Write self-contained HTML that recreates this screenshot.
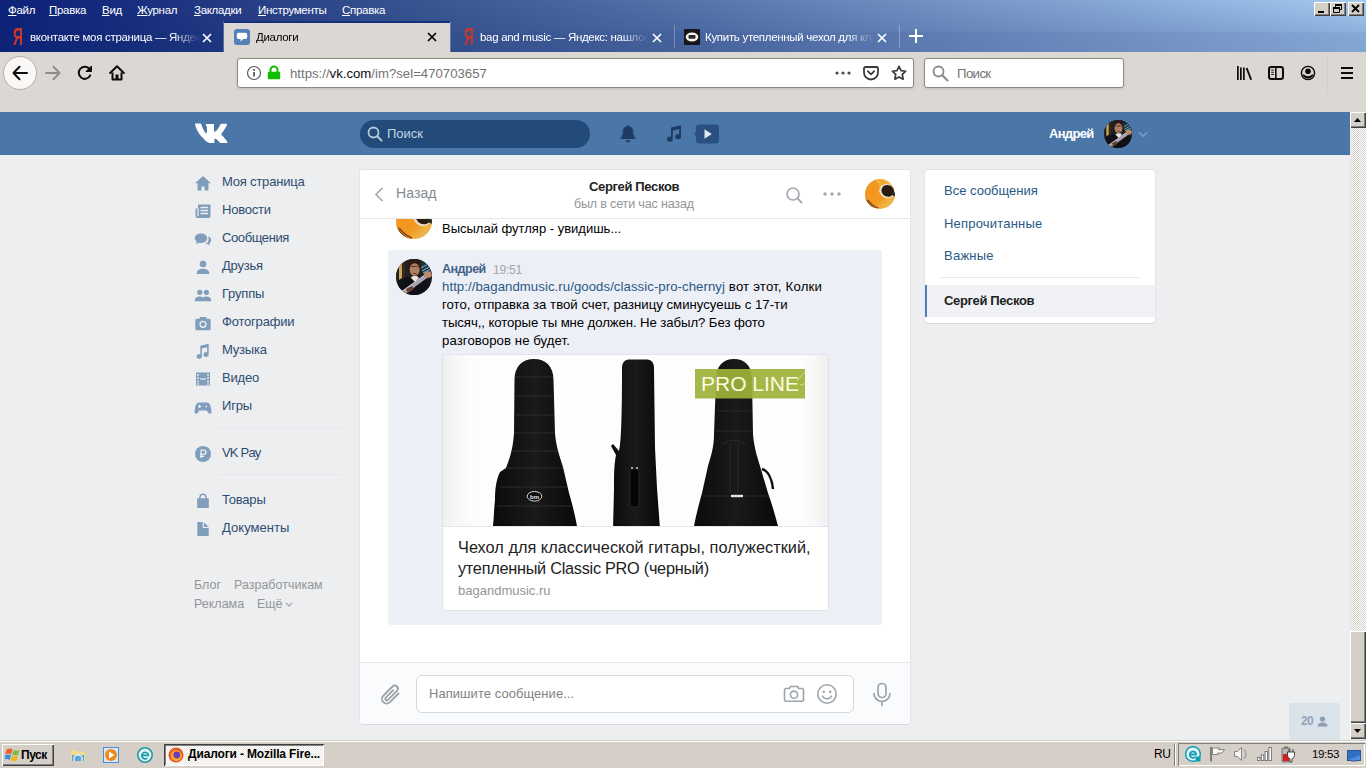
<!DOCTYPE html>
<html lang="ru">
<head>
<meta charset="utf-8">
<title>Диалоги</title>
<style>
*{box-sizing:border-box;margin:0;padding:0}
html,body{width:1366px;height:768px;overflow:hidden}
body{position:relative;background:#edeef0;font-family:"Liberation Sans","DejaVu Sans",sans-serif;font-size:13px;color:#000}
.abs{position:absolute}
.t{position:absolute;white-space:nowrap;line-height:1}
/* ---------- browser chrome ---------- */
#titlebar{position:absolute;left:0;top:0;width:1366px;height:52px;
 background:linear-gradient(to bottom,rgba(10,36,106,0) 0,rgba(10,36,106,.1) 22px,rgba(10,36,106,.14) 31px,rgba(10,36,106,.2) 33px,rgba(10,36,106,.22) 52px),
 linear-gradient(to right,#0d2278 0,#152a7c 7%,#3a5692 31%,#5774ab 51%,#a6caf0 100%);}
.menu{top:5px;color:#fff;font-size:11.5px;font-family:"Liberation Sans",sans-serif;letter-spacing:-.3px}
.menu u{text-decoration:underline;text-underline-offset:1px}
.tab{position:absolute;top:22px;height:30px;color:#fff;font-size:12px}
.tab .lbl{position:absolute;top:8px;left:30px;white-space:nowrap;overflow:hidden;font-family:"Liberation Sans",sans-serif;font-size:11.5px;letter-spacing:-.3px;line-height:14px;-webkit-mask-image:linear-gradient(to right,#000 0,#000 calc(100% - 26px),transparent 100%);mask-image:linear-gradient(to right,#000 0,#000 calc(100% - 26px),transparent 100%)}
#navbar{position:absolute;left:0;top:52px;width:1366px;height:60px;background:#dbd8d3}
.field{position:absolute;background:#fff;border:1px solid #8c8a85;border-radius:3px;box-shadow:0 1px 3px rgba(0,0,0,.12)}

.wb{position:absolute;top:2px;width:16px;height:14px;background:#d4d0c8;box-shadow:inset 1px 1px 0 #fff,inset -1px -1px 0 #404040,inset -2px -2px 0 #808080}
.wb svg{position:absolute;left:0;top:0}
.tab.act{background:#dbd8d3;top:21px;height:31px;border-top:2px solid #16307c;box-shadow:-1px 0 0 rgba(255,255,255,.25),1px 0 0 rgba(255,255,255,.25)}
.tab.act .lbl{top:7px}
.tab.act .tx{top:9px}
.ya{position:absolute;top:4px;color:#cb352c;font:bold 23px/23px "Liberation Sans",sans-serif;transform:scaleX(.6);transform-origin:0 0}
.tx{position:absolute;top:11px}
.tsep{position:absolute;top:25px;width:1px;height:23px;background:rgba(255,255,255,.28)}
.url{font-size:13.2px;letter-spacing:0;color:#0c0c0d;font-family:"Liberation Sans",sans-serif}
/* ---------- vk ---------- */
#vkhead{position:absolute;left:0;top:112px;width:1350px;height:43px;background:#4a76a8;border-bottom:1px solid #4872a3}
.lm{position:absolute;left:222px;font-size:13px;letter-spacing:-.2px;color:#2d4d70;white-space:nowrap;line-height:16px}
.panel{position:absolute;background:#fff;border-radius:4px;box-shadow:0 1px 0 0 #d7d8db,0 0 0 1px #e3e4e8}

.ft{font-size:12.500px;color:#939699}
.ava1{border-radius:50%;background:
 radial-gradient(circle at 52% 40%,#c9a58d 0,#b8836a 9%,rgba(80,40,30,0) 17%),
 linear-gradient(128deg,rgba(0,0,0,0) 52%,#d8c8b0 54%,#cbb79c 60%,rgba(0,0,0,0) 63%),
 linear-gradient(100deg,#3a4a40 0,#2b3036 28%,#15161c 55%,#20222c 75%,#5b6f9a 100%)}

.msg{font-size:13.2px;color:#000}
.rm{font-size:13px;color:#2a5885}
.ava2{border-radius:50%;background:
 radial-gradient(ellipse 34% 30% at 78% 42%,#1a1510 0,#2a1d14 55%,rgba(40,25,15,0) 100%),
 radial-gradient(ellipse 46% 42% at 76% 42%,#f7e6c8 0,#e9c48c 70%,rgba(230,180,100,0) 100%),
 radial-gradient(circle at 35% 45%,#f6a92e 0,#ee8a12 45%,#d96a08 80%,#b85206 100%)}
.ava3{border-radius:50%;background:
 radial-gradient(circle at 50% 34%,#d0a78c 0,#b9836a 10%,rgba(80,40,30,0) 17%),
 linear-gradient(128deg,rgba(0,0,0,0) 55%,#bda27a 57%,#a98d65 63%,rgba(0,0,0,0) 66%),
 radial-gradient(circle at 78% 30%,#50648c 0,rgba(40,50,80,0) 30%),
 linear-gradient(100deg,#46503e 0,#2b2d30 25%,#121318 55%,#1c1e28 100%)}
#sb{position:absolute;left:1350px;top:112px;width:16px;height:628px;background:repeating-conic-gradient(#fff 0 25%,#d4d0c8 0 50%);background-size:2px 2px}
.sbtn{position:absolute;left:0;width:16px;height:16px;background:#d4d0c8;box-shadow:inset 1px 1px 0 #fff,inset -1px -1px 0 #404040,inset -2px -2px 0 #808080}
.sbtn svg{position:absolute;left:0;top:0}
.btn3d{background:#d4d0c8;box-shadow:inset 1px 1px 0 #fff,inset -1px -1px 0 #404040,inset -2px -2px 0 #808080}
/* ---------- taskbar ---------- */
#taskbar{position:absolute;left:0;top:740px;width:1366px;height:28px;background:#d5cfc8;box-shadow:inset 0 1px 0 #d4d0c8,inset 0 2px 0 #fff}
</style>
</head>
<body>
<svg width="0" height="0" style="position:absolute">
  <defs>
    <clipPath id="cc"><circle cx="18" cy="18" r="18"/></clipPath>
    <radialGradient id="og" cx=".3" cy=".45" r=".75"><stop offset="0" stop-color="#f7941d"/><stop offset=".45" stop-color="#f09a22"/><stop offset=".8" stop-color="#f0b548"/><stop offset="1" stop-color="#e9a83a"/></radialGradient>
    <symbol id="avS" viewBox="0 0 36 36">
      <g clip-path="url(#cc)">
        <rect width="36" height="36" fill="url(#og)"/>
        <path d="M0 22c4 8 10 13 18 15l-18 3z" fill="#4a1f08"/>
        <path d="M3 25c4 5 8 8 13 10" stroke="#8a3c0c" stroke-width="1.500" fill="none"/>
        <path d="M14 2c6 2 6 10 3 14" stroke="#f6c052" stroke-width="3" fill="none" opacity=".7"/>
        <ellipse cx="26.500" cy="14.500" rx="9.300" ry="8.600" fill="#e9dfc6" transform="rotate(25 26.500 14.500)"/>
        <ellipse cx="27.300" cy="14.200" rx="7.600" ry="6.900" fill="#2a1a10" transform="rotate(25 27.300 14.200)"/>
        <path d="M30 18l6 3v-5z" fill="#1f2a22"/>
      </g>
    </symbol>
    <symbol id="avA" viewBox="0 0 36 36">
      <g clip-path="url(#cc)">
        <rect width="36" height="36" fill="#15161b"/>
        <rect x="0" y="0" width="36" height="20" fill="#23201f"/>
        <path d="M3 6l3-4v17l-3 2z" fill="#c9a560"/>
        <path d="M6.500 3h2.500v14l-2.500 2z" fill="#3a2a1c"/>
        <path d="M22 4l14-2v16l-8-3z" fill="#1d3440"/>
        <path d="M25 9l9-5M26 12l9-5M27 14l8-4" stroke="#6fa0b4" stroke-width="1.200"/>
        <path d="M12 8c0-5 3-7 6.500-7S25 3 25 8v3H12z" fill="#2c1a12"/>
        <ellipse cx="18.600" cy="10.500" rx="5" ry="6.300" fill="#b07f66"/>
        <path d="M14.500 8c2-1 6-1 8.500 0" stroke="#6a4636" stroke-width="1"/>
        <path d="M17 14.500h3.500" stroke="#7a3f36" stroke-width="1.200"/>
        <path d="M13 20l4-3h4l3 3-5 4z" fill="#e8e4e0"/>
        <path d="M2 26c2-5 8-8 12-8l5 5 5-5c5 1 9 4 10 9l-6 10H6z" fill="#101116"/>
        <path d="M5 33L33 13l2 3L8 36z" fill="#a9a0b6"/>
        <path d="M5 33L33 13" stroke="#d8d2de" stroke-width="1"/>
        <ellipse cx="32" cy="15.500" rx="4" ry="3.300" fill="#b98a70"/>
        <path d="M4 31l6 2-3 4-5-2z" fill="#d6b23a"/>
        <path d="M10 30l6-3 2 3-6 4z" fill="#6a4030"/>
      </g>
    </symbol>
  </defs>
</svg>

<!-- ================= TITLE / MENU / TABS ================= -->
<div id="titlebar">
  <span class="t menu" style="left:8px"><u>Ф</u>айл</span>
  <span class="t menu" style="left:49px"><u>П</u>равка</span>
  <span class="t menu" style="left:102px"><u>В</u>ид</span>
  <span class="t menu" style="left:137px"><u>Ж</u>урнал</span>
  <span class="t menu" style="left:194px"><u>З</u>акладки</span>
  <span class="t menu" style="left:258px"><u>И</u>нструменты</span>
  <span class="t menu" style="left:342px"><u>С</u>правка</span>

  <!-- window buttons -->
  <div class="wb" style="left:1314px"><svg width="16" height="14" viewBox="0 0 16 14"><rect x="4" y="9" width="6" height="2" fill="#000"/></svg></div>
  <div class="wb" style="left:1330px"><svg width="16" height="14" viewBox="0 0 16 14"><path d="M5.5 2.5h6v5h-6z M3.500 5.500h6v5h-6z" fill="none" stroke="#000" stroke-width="1"/><rect x="5" y="2" width="7" height="2" fill="#000"/><rect x="3" y="5" width="7" height="2" fill="#000"/><rect x="4" y="7" width="5" height="3" fill="#d4d0c8"/></svg></div>
  <div class="wb" style="left:1348px"><svg width="16" height="14" viewBox="0 0 16 14"><path d="M4 3l7 7M11 3l-7 7" stroke="#000" stroke-width="1.8" fill="none"/></svg></div>

  <!-- tab 1 -->
  <div class="tab" style="left:0;width:224px">
    <span class="ya" style="left:13px">Я</span>
    <span class="lbl" style="width:170px">вконтакте моя страница — Яндекс: нашлось</span>
    <svg class="tx" style="left:202px" width="10" height="10" viewBox="0 0 10 10"><path d="M1 1l8 8M9 1l-8 8" stroke="#fff" stroke-width="1.7" fill="none"/></svg>
  </div>
  <!-- tab 2 (active) -->
  <div class="tab act" style="left:224px;width:226px">
    <svg class="abs" style="left:10px;top:6px" width="16" height="16" viewBox="0 0 16 16"><rect width="16" height="16" rx="3" fill="#5181b8"/><path d="M4.600 3.800h6.800a1.800 1.800 0 0 1 1.800 1.800v2.600a1.800 1.800 0 0 1-1.800 1.800H9.200L6.600 12.400V10H4.600a1.800 1.800 0 0 1-1.800-1.800V5.600a1.800 1.800 0 0 1 1.800-1.800z" fill="#fff"/></svg>
    <span class="lbl" style="width:150px;left:32px;color:#000">Диалоги</span>
    <svg class="tx" style="left:203px" width="10" height="10" viewBox="0 0 10 10"><path d="M1 1l8 8M9 1l-8 8" stroke="#000" stroke-width="1.7" fill="none"/></svg>
  </div>
  <!-- tab 3 -->
  <div class="tab" style="left:450px;width:224px">
    <span class="ya" style="left:14px">Я</span>
    <span class="lbl" style="width:168px;left:30px">bag and music — Яндекс: нашлось 15 млн</span>
    <svg class="tx" style="left:202px" width="10" height="10" viewBox="0 0 10 10"><path d="M1 1l8 8M9 1l-8 8" stroke="#fff" stroke-width="1.7" fill="none"/></svg>
  </div>
  <div class="tsep" style="left:674px"></div>
  <!-- tab 4 -->
  <div class="tab" style="left:675px;width:224px">
    <svg class="abs" style="left:9px;top:7px" width="16" height="16" viewBox="0 0 16 16"><rect width="16" height="16" fill="#15171c"/><ellipse cx="8" cy="8" rx="6.300" ry="4.600" fill="#f4f2ea"/><rect x="4.500" y="6" width="7" height="3.800" rx="1" fill="#2a2a2a"/></svg>
    <span class="lbl" style="width:169px;left:30px">Купить утепленный чехол для классической</span>
    <svg class="tx" style="left:202px" width="10" height="10" viewBox="0 0 10 10"><path d="M1 1l8 8M9 1l-8 8" stroke="#fff" stroke-width="1.700" fill="none"/></svg>
  </div>
  <div class="tsep" style="left:899px"></div>
  <svg class="abs" style="left:909px;top:29px" width="14" height="14" viewBox="0 0 14 14"><path d="M7 0v14M0 7h14" stroke="#fff" stroke-width="2" fill="none"/></svg>
</div>

<div id="navbar">
  <div class="abs" style="left:3px;top:4px;width:34px;height:34px;border-radius:50%;background:#f9f8f7;border:1px solid #b4b1ab"></div>
  <svg class="abs" style="left:12px;top:13px" width="16" height="16" viewBox="0 0 16 16"><path d="M15 8H2M7.500 1.800L1.500 8l6 6.200" stroke="#0c0c0d" stroke-width="2" fill="none" stroke-linecap="round" stroke-linejoin="round"/></svg>
  <svg class="abs" style="left:45px;top:13px" width="16" height="16" viewBox="0 0 16 16"><path d="M1 8h13M8.500 1.800L14.500 8l-6 6.200" stroke="#8f8d89" stroke-width="2" fill="none" stroke-linecap="round" stroke-linejoin="round"/></svg>
  <svg class="abs" style="left:77px;top:13px" width="16" height="16" viewBox="0 0 16 16"><path d="M13.200 10.400A6 6 0 1 1 12.600 4.300" stroke="#0c0c0d" stroke-width="2" fill="none" stroke-linecap="round"/><path d="M14.500 1v5.500H9z" fill="#0c0c0d" stroke="#0c0c0d" stroke-width="1" stroke-linejoin="round"/></svg>
  <svg class="abs" style="left:109px;top:13px" width="16" height="16" viewBox="0 0 16 16"><path d="M1.200 8L8 1.300 14.800 8" stroke="#0c0c0d" stroke-width="2" fill="none" stroke-linecap="round" stroke-linejoin="round"/><path d="M3.500 7.500V14.500h9V7.500" stroke="#0c0c0d" stroke-width="2" fill="none" stroke-linejoin="round"/><rect x="6.500" y="9.500" width="3" height="4.500" fill="#0c0c0d"/></svg>

  <!-- url bar -->
  <div class="field" style="left:237px;top:6px;width:677px;height:30px"></div>
  <svg class="abs" style="left:246px;top:13px" width="16" height="16" viewBox="0 0 16 16"><circle cx="8" cy="8" r="6.500" fill="none" stroke="#5a5a5a" stroke-width="1.200"/><rect x="7.200" y="7" width="1.600" height="4.500" fill="#4a4a4a"/><circle cx="8" cy="5" r="1" fill="#4a4a4a"/></svg>
  <svg class="abs" style="left:266px;top:13px" width="16" height="16" viewBox="0 0 16 16"><path d="M4.500 7V5a3.500 3.500 0 0 1 7 0v2" fill="none" stroke="#12bc00" stroke-width="2"/><rect x="1.800" y="6.800" width="12.400" height="7.400" rx="1" fill="#12bc00"/></svg>
  <span class="t url" style="left:290px;top:15px"><span style="color:#737373">https://</span>vk.com<span style="color:#737373">/im?sel=470703657</span></span>
  <svg class="abs" style="left:835px;top:19px" width="16" height="4" viewBox="0 0 16 4"><circle cx="2" cy="2" r="1.600" fill="#4a4a4a"/><circle cx="8" cy="2" r="1.600" fill="#4a4a4a"/><circle cx="14" cy="2" r="1.600" fill="#4a4a4a"/></svg>
  <svg class="abs" style="left:863px;top:14px" width="16" height="15" viewBox="0 0 16 15"><path d="M2.500 1h11a1.500 1.500 0 0 1 1.500 1.500V6.500a7 7 0 0 1-14 0V2.500A1.500 1.500 0 0 1 2.500 1z" fill="none" stroke="#3a3a3a" stroke-width="1.800"/><path d="M4.800 5.200L8 8.300l3.200-3.100" fill="none" stroke="#3a3a3a" stroke-width="1.800" stroke-linecap="round" stroke-linejoin="round"/></svg>
  <svg class="abs" style="left:891px;top:13px" width="16" height="16" viewBox="0 0 16 16"><path d="M8 1.300l2.060 4.300 4.640.62-3.400 3.260.85 4.720L8 11.900l-4.150 2.300.85-4.720-3.400-3.260 4.640-.62z" fill="none" stroke="#3a3a3a" stroke-width="1.700" stroke-linejoin="round"/></svg>

  <!-- search bar -->
  <div class="field" style="left:924px;top:6px;width:200px;height:30px"></div>
  <svg class="abs" style="left:932px;top:13px" width="17" height="17" viewBox="0 0 17 17"><circle cx="6.500" cy="6.500" r="5" fill="none" stroke="#8a8a8a" stroke-width="1.800"/><path d="M10.300 10.300L15.500 15.500" stroke="#8a8a8a" stroke-width="2" stroke-linecap="round"/></svg>
  <span class="t url" style="left:957px;top:15px;color:#737373;letter-spacing:-.6px">Поиск</span>

  <!-- right icons -->
  <svg class="abs" style="left:1236px;top:14px" width="16" height="14" viewBox="0 0 16 14"><rect x="1" y="0" width="1.700" height="14" fill="#0c0c0d"/><rect x="4" y="1.500" width="1.700" height="12.500" fill="#0c0c0d"/><rect x="7" y="1.500" width="1.700" height="12.500" fill="#0c0c0d"/><path d="M10.600 2L15.200 13.700" stroke="#0c0c0d" stroke-width="1.900" fill="none"/></svg>
  <svg class="abs" style="left:1268px;top:14px" width="16" height="14" viewBox="0 0 16 14"><rect x="1" y="1" width="14" height="12" rx="2.200" fill="none" stroke="#0c0c0d" stroke-width="2"/><rect x="7" y="1" width="1.600" height="12" fill="#0c0c0d"/><rect x="3.200" y="3.600" width="2.600" height="1" fill="#0c0c0d"/><rect x="3.200" y="5.800" width="2.600" height="1" fill="#0c0c0d"/><rect x="3.200" y="8" width="2.600" height="1" fill="#0c0c0d"/></svg>
  <svg class="abs" style="left:1300px;top:13px" width="16" height="16" viewBox="0 0 16 16"><circle cx="8" cy="8" r="6.600" fill="none" stroke="#0c0c0d" stroke-width="1.400"/><circle cx="8" cy="6.200" r="2.800" fill="#0c0c0d"/><path d="M3.200 9.800a5.300 5.300 0 0 0 9.600 0 6.500 6.500 0 0 1-9.600 0z" fill="#0c0c0d" stroke="#0c0c0d" stroke-width="1.300"/></svg>
  <div class="abs" style="left:1327px;top:5px;width:1px;height:36px;background:#d1cec8"></div>
  <div class="abs" style="left:1341px;top:15px;width:12px;height:2px;background:#0c0c0d"></div>
  <div class="abs" style="left:1341px;top:20px;width:12px;height:2px;background:#0c0c0d"></div>
  <div class="abs" style="left:1341px;top:25px;width:12px;height:2px;background:#0c0c0d"></div>
</div>

<!-- ================= VK ================= -->
<div id="vkhead">
  <svg class="abs" style="left:195px;top:11px" width="33" height="20" viewBox="0 0 33 20"><path d="M0 .5h5.200c.7 0 1 .3 1.200 1 1.300 4.200 3.600 8.300 4.800 8.800.5.200.7-.1.700-1.200V4.700c-.1-2-1.200-2.200-1.200-2.900 0-.4.300-.8.800-.8h6.700c.6 0 .8.300.8 1v6c0 .6.300.8.500.8.600 0 1.200-.4 2.300-1.600 2-2.400 3.500-5.500 3.500-5.500.2-.5.600-.9 1.300-.9h4.300c1 0 1.200.5 1 1.200-.6 2.400-5.300 8.500-5.300 8.500-.4.600-.5.900 0 1.600.4.500 1.700 1.600 2.600 2.600 1.600 1.800 2.800 3.300 3.100 4.300.3 1-.2 1.500-1.200 1.500h-4.600c-1.100 0-1.500-.7-3.400-2.700-1.700-1.700-2.500-2-2.900-2-.6 0-.8.200-.8 1v2.600c0 .8-.2 1.100-2 1.100-3.200 0-6.800-1.900-9.300-5.500C2.600 10 .6 3.800.2 1.700 0 .9.100.5 0 .5z" fill="#fff"/></svg>
  <div class="abs" style="left:360px;top:8px;width:230px;height:28px;border-radius:14px;background:#224b7a"></div>
  <svg class="abs" style="left:367px;top:14px" width="16" height="16" viewBox="0 0 16 16"><circle cx="6.500" cy="6.500" r="5" fill="none" stroke="#b7c7dc" stroke-width="1.800"/><path d="M10.300 10.300L14.600 14.600" stroke="#b7c7dc" stroke-width="2" stroke-linecap="round"/></svg>
  <span class="t" style="left:387px;top:15px;font-size:13px;color:#c4d2e4">Поиск</span>
  <svg class="abs" style="left:619px;top:12px" width="18" height="20" viewBox="0 0 18 20"><path d="M9 1.200c.7 0 1.200.5 1.200 1.100 2.500.6 4 2.600 4 5.300 0 3.800.8 5 2.200 6.300.4.400.2 1.100-.5 1.100H2.100c-.7 0-.9-.7-.5-1.100C3 12.600 3.800 11.400 3.800 7.600c0-2.700 1.500-4.700 4-5.300 0-.6.500-1.100 1.200-1.100zM6.800 16.200h4.400a2.200 2.200 0 0 1-4.400 0z" fill="#1e3c63"/></svg>
  <svg class="abs" style="left:665px;top:12px" width="18" height="20" viewBox="0 0 18 20"><path d="M6 3.600l10-2.400v11.500a2.900 2.500 0 1 1-1.800-2.300V5L7.800 6.500v8.700a2.900 2.500 0 1 1-1.800-2.300z" fill="#1e3c63"/></svg>
  <svg class="abs" style="left:694px;top:11px" width="26" height="22" viewBox="0 0 26 22"><path d="M5 1.500h17a3 3 0 0 1 3 3v13a3 3 0 0 1-3 3H5a3 3 0 0 1-3-3V14l-1.500-3L2 8V4.500a3 3 0 0 1 3-3z" fill="#2a5080"/><path d="M10.500 6.200l7.300 4.800-7.300 4.800z" fill="#dfe7f1"/></svg>
  <span class="t" style="left:1049px;top:15px;font-size:13px;font-weight:bold;color:#fff;letter-spacing:-.7px">Андрей</span>
  <svg class="abs" style="left:1104px;top:8px" width="28" height="28"><use href="#avA"/></svg>
  <svg class="abs" style="left:1138px;top:19px" width="10" height="7" viewBox="0 0 10 7"><path d="M1 1.200l4 4 4-4" fill="none" stroke="#7f9fc8" stroke-width="1.600"/></svg>
</div>
<!-- left menu -->
  <div class="abs" style="left:194px;top:174px;width:18px;height:18px"><svg width="18" height="18" viewBox="0 0 18 18" fill="#819dbc"><path d="M9 2L1 9.300h2.600V16.500h3.900v-4h3v4h3.900V9.300H17z"/></svg></div>
  <span class="lm" style="top:174px">Моя страница</span>
  <div class="abs" style="left:194px;top:202px;width:18px;height:18px"><svg width="18" height="18" viewBox="0 0 18 18" fill="#819dbc"><path d="M4 2.500h11.500a1 1 0 0 1 1 1V14a2 2 0 0 1-2 2H3.500a2 2 0 0 1-2-2V6.500H4z"/><path d="M4 6.500V14" stroke="#edeef0" stroke-width="1.200"/><path d="M6.500 5.500h7.500M6.500 8.500h7.500M6.500 11.500h7.500" stroke="#edeef0" stroke-width="1.300"/></svg></div>
  <span class="lm" style="top:202px">Новости</span>
  <div class="abs" style="left:194px;top:230px;width:18px;height:18px"><svg width="18" height="18" viewBox="0 0 18 18" fill="#819dbc"><path d="M7 3.500c3.600 0 6.200 2.100 6.200 4.700S10.600 12.900 7 12.900c-.7 0-1.400-.1-2-.2-.8.700-2 1.200-3.200 1.200.6-.6 1-1.500 1.100-2.200C1.700 10.800.8 9.600.8 8.200.8 5.600 3.400 3.500 7 3.500z"/><path d="M14.400 6.200c1.700.8 2.800 2.200 2.800 3.800 0 1.300-.7 2.400-1.800 3.200.1.600.4 1.300.9 1.800-1.100 0-2.100-.4-2.800-1-.7.200-1.500.2-2.300.1 2-1 3.400-2.700 3.400-4.900 0-1-.1-2.100-.2-3z"/></svg></div>
  <span class="lm" style="top:230px;letter-spacing:-.4px">Сообщения</span>
  <div class="abs" style="left:194px;top:258px;width:18px;height:18px"><svg width="18" height="18" viewBox="0 0 18 18" fill="#819dbc"><circle cx="9" cy="6" r="3.300"/><path d="M2.800 15.500c0-3.200 2.800-4.700 6.200-4.700s6.200 1.500 6.200 4.700v.5H2.800z"/></svg></div>
  <span class="lm" style="top:258px">Друзья</span>
  <div class="abs" style="left:194px;top:286px;width:18px;height:18px"><svg width="18" height="18" viewBox="0 0 18 18" fill="#819dbc"><circle cx="5.800" cy="6.300" r="2.600"/><circle cx="12.400" cy="6.300" r="2.600"/><path d="M.8 14.800c0-2.900 2.300-4.200 5-4.200 1.300 0 2.400.3 3.300.9.900-.6 2-.9 3.300-.9 2.700 0 4.800 1.300 4.800 4.200v.4H.8z"/></svg></div>
  <span class="lm" style="top:286px">Группы</span>
  <div class="abs" style="left:194px;top:314px;width:18px;height:18px"><svg width="18" height="18" viewBox="0 0 18 18" fill="#819dbc"><path d="M6.300 3l-1.200 1.800H2.800A1.500 1.500 0 0 0 1.300 6.300v8.400a1.500 1.500 0 0 0 1.500 1.500h12.400a1.500 1.500 0 0 0 1.500-1.500V6.300a1.500 1.500 0 0 0-1.500-1.500h-2.300L11.700 3z"/><circle cx="9" cy="10.300" r="3.600" fill="#edeef0"/><circle cx="9" cy="10.300" r="2.200"/></svg></div>
  <span class="lm" style="top:314px">Фотографии</span>
  <div class="abs" style="left:194px;top:342px;width:18px;height:18px"><svg width="18" height="18" viewBox="0 0 18 18" fill="#819dbc"><path d="M6.300 3.800l8.400-2v10.700a2.600 2.300 0 1 1-1.600-2.100V5.200L7.900 6.400v8.100a2.600 2.300 0 1 1-1.600-2.100z"/></svg></div>
  <span class="lm" style="top:342px">Музыка</span>
  <div class="abs" style="left:194px;top:370px;width:18px;height:18px"><svg width="18" height="18" viewBox="0 0 18 18" fill="#819dbc"><path d="M2 2.500h14v13H2z"/><path d="M3.200 4h1.600v1.800H3.200zM3.200 7.200h1.600V9H3.200zM3.200 10.400h1.600v1.800H3.200zM3.200 13.300h1.600v1.400H3.200zM13.200 4h1.600v1.800h-1.600zM13.200 7.200h1.600V9h-1.600zM13.200 10.400h1.600v1.800h-1.600zM13.200 13.300h1.600v1.400h-1.600z" fill="#edeef0"/><path d="M6 8.400h6v1.200H6z" fill="#edeef0"/></svg></div>
  <span class="lm" style="top:370px">Видео</span>
  <div class="abs" style="left:194px;top:398px;width:18px;height:18px"><svg width="18" height="18" viewBox="0 0 18 18" fill="#819dbc"><path d="M5.300 4.500h7.400c2.300 0 3.600 1.800 4.100 4.600l.7 4.400c.3 2.100-2.200 3-3.300 1.300l-1.500-2.300H5.300l-1.500 2.300c-1.100 1.700-3.600.8-3.300-1.300l.7-4.400C1.700 6.300 3 4.500 5.300 4.500z"/><path d="M5.600 6.800v3.200M4 8.400h3.200" stroke="#edeef0" stroke-width="1.100"/><circle cx="12.300" cy="8.400" r=".9" fill="#edeef0"/></svg></div>
  <span class="lm" style="top:398px">Игры</span>
  <div class="abs" style="left:194px;top:445px;width:18px;height:18px"><svg width="18" height="18" viewBox="0 0 18 18" fill="#819dbc"><circle cx="9" cy="9" r="8"/><path d="M7.200 13V5.200h2.700a2.100 2.100 0 0 1 0 4.200H6M6 11.300h4" stroke="#edeef0" stroke-width="1.300" fill="none"/></svg></div>
  <span class="lm" style="top:445px;letter-spacing:-.8px">VK Pay</span>
  <div class="abs" style="left:194px;top:492px;width:18px;height:18px"><svg width="18" height="18" viewBox="0 0 18 18" fill="#819dbc"><path d="M3.200 6.300h11.600V16H3.200z"/><path d="M6 8V5.200a3 3 0 0 1 6 0V8" fill="none" stroke="#819dbc" stroke-width="1.400"/></svg></div>
  <span class="lm" style="top:492px">Товары</span>
  <div class="abs" style="left:194px;top:520px;width:18px;height:18px"><svg width="18" height="18" viewBox="0 0 18 18" fill="#819dbc"><path d="M3.300 2h6.400l5 5v9H3.300z"/><path d="M9.300 2v5.500h5.400" fill="none" stroke="#edeef0" stroke-width="1.200"/></svg></div>
  <span class="lm" style="top:520px;letter-spacing:.05px">Документы</span>
  <div class="abs" style="left:217px;top:427px;width:125px;height:1px;background:#e4e6e9"></div>
  <div class="abs" style="left:217px;top:474px;width:125px;height:1px;background:#e4e6e9"></div>
  <span class="t ft" style="left:194px;top:579px">Блог</span>
  <span class="t ft" style="left:234px;top:579px">Разработчикам</span>
  <span class="t ft" style="left:194px;top:598px">Реклама</span>
  <span class="t ft" style="left:257px;top:598px">Ещё</span>
  <svg class="abs" style="left:285px;top:602px" width="8" height="5" viewBox="0 0 8 5"><path d="M1 1l3 3 3-3" fill="none" stroke="#a9adb3" stroke-width="1.300"/></svg>

<div class="panel" id="chat" style="left:360px;top:170px;width:550px;height:554px;overflow:hidden;border-radius:2px 2px 4px 4px">
  <!-- coordinates inside are relative to (360,170) -->
  <!-- previous message (partially hidden under header) -->
  <svg class="abs" style="left:36px;top:33px" width="36" height="36"><use href="#avS"/></svg>
  <span class="t msg" style="left:82px;top:52px;font-size:13px">Высылай футляр - увидишь...</span>
  <span class="t" style="left:82px;top:34px;font-size:13px;font-weight:bold;color:#42648b">Сергей</span>

  <!-- selected message -->
  <div class="abs" style="left:28px;top:80px;width:494px;height:375px;background:#edeff6;border-radius:3px"></div>
  <svg class="abs" style="left:36px;top:89px" width="36" height="36"><use href="#avA"/></svg>
  <span class="t" style="left:82px;top:93px;font-size:12.500px;font-weight:bold;color:#42648b;letter-spacing:-.5px">Андрей</span>
  <span class="t" style="left:133px;top:94px;font-size:12px;color:#a2a5a9;letter-spacing:-.2px">19:51</span>
  <div class="abs msg" style="left:82px;top:108px;width:400px;line-height:18px;white-space:nowrap"><span id="l1"><span id="l1a" style="color:#2a5885;letter-spacing:.064px">http://bagandmusic.ru/goods/classic-pro-chernyj</span><span style="letter-spacing:.18px"> вот этот, Колки</span></span><br><span id="l2">гото, отправка за твой счет, разницу сминусуешь с 17-ти</span><br><span id="l3" style="letter-spacing:-.088px">тысяч,, которые ты мне должен. Не забыл? Без фото</span><br><span id="l4" style="letter-spacing:.075px">разговоров не будет.</span></div>

  <!-- link card -->
  <div class="abs" style="left:82px;top:184px;width:387px;height:257px;background:#fff;border:1px solid #e1e3e8;border-radius:2px;overflow:hidden">
    <div id="photo" class="abs" style="left:0;top:0;width:385px;height:171px;background:#fbfbfb">
      <svg class="abs" style="left:0;top:0" width="385" height="171" viewBox="443 356 385 171">
        <defs>
          <linearGradient id="bgg" x1="0" x2="1" y1="0" y2="0"><stop offset="0" stop-color="#f0f0f0"/><stop offset=".04" stop-color="#f8f8f8"/><stop offset=".08" stop-color="#fdfdfd"/><stop offset=".93" stop-color="#fdfdfd"/><stop offset=".97" stop-color="#f7f7f7"/><stop offset="1" stop-color="#efefef"/></linearGradient>
          <linearGradient id="bk" x1="0" x2="1" y1="0" y2="0"><stop offset="0" stop-color="#0b0b0c"/><stop offset=".5" stop-color="#1a1a1c"/><stop offset="1" stop-color="#09090a"/></linearGradient>
        </defs>
        <rect x="443" y="356" width="385" height="171" fill="url(#bgg)"/>
        <!-- bag 1: front -->
        <path d="M514.500 381c0-14 8-21 19.500-21s19.500 7 19.500 21l1.500 53c1 14 5 24 8 34l6 26c3 10 6 22 8 33H493c1-10 1-18 2-26 0-10 1-20 5-28l6-4c4-10 7-20 8-35z" fill="url(#bk)"/>
        <g stroke="#2c2c2f" stroke-width="1.100" fill="none"><path d="M515 378h38M515 397h39M514 416h40M514 434h41M512 452h46M507 469h56M500 488h67M497 507h74"/></g>
        <ellipse cx="534.500" cy="497.300" rx="7.300" ry="4.800" fill="#0d0d0e" stroke="#d8d8d8" stroke-width="1"/>
        <text x="534.500" y="499.600" font-family="Liberation Sans, sans-serif" font-size="6" font-weight="bold" fill="#e8e8e8" text-anchor="middle">bm</text>
        <!-- bag 2: side -->
        <path d="M622 369c0-6 3-8.500 8-8.500h16c5 0 8 2.500 8 8.500l1 80 2 40 3 41H613l1-40c0-14 0-24 2-34l-5-9 2-2 6 7c2-8 3-30 3-83z" fill="url(#bk)"/>
        <rect x="630" y="470" width="9" height="38" rx="2" fill="#050506" stroke="#2a2a2d" stroke-width=".8"/>
        <path d="M631 469h2M636 469h2" stroke="#cfcfcf" stroke-width="1.400"/>
        <!-- bag 3: back -->
        <path d="M716 380c0-13 7-20 18-20s18 7 18 20l1 55c1 13 4 22 7 32l8 27c4 11 7 22 10 33H694c2-11 5-22 8-33l6-27c3-10 6-19 6-32z" fill="url(#bk)"/>
        <path d="M762 470c6 2 10 10 11 20" fill="none" stroke="#0c0c0d" stroke-width="2.500"/>
        <g stroke="#2b2b2e" stroke-width="1" fill="none"><path d="M718 412h32M716 432h36M722 446c4-6 20-6 24 0M730 444v50M738 444v50M703 497h66"/></g>
        <rect x="731" y="495.800" width="12" height="2.400" fill="#e6e6e6"/>
        <!-- badge -->
        <rect x="695" y="370" width="110" height="29.500" fill="#9db33a" fill-opacity=".93"/>
        <path d="M797 382c3-3 5-7 9-10M800 386c3 0 5-2 8-2" stroke="#e8efc0" stroke-width=".8" fill="none" opacity=".8"/>
        <text x="701" y="392" font-family="Liberation Sans, sans-serif" font-size="20.500" fill="#fffbe2" textLength="98" lengthAdjust="spacingAndGlyphs">PRO LINE</text>
      </svg>
    </div>
    <div class="abs" style="left:0;top:171px;width:385px;height:1px;background:#e4e6ea"></div>
    <div class="abs" style="left:15px;top:182px;font-size:16.300px;line-height:20.500px;color:#222;white-space:nowrap;letter-spacing:.03px"><span id="c1">Чехол для классической гитары, полужесткий,</span><br><span id="c2" style="letter-spacing:-.27px">утепленный Classic PRO (черный)</span></div>
    <span class="t" style="left:15px;top:229px;font-size:13px;color:#939699">bagandmusic.ru</span>
  </div>

  <!-- chat header -->
  <div class="abs" style="left:0;top:0;width:550px;height:49px;background:#fff;border-bottom:1px solid #e4e6ea"></div>
  <svg class="abs" style="left:14px;top:17px" width="10" height="15" viewBox="0 0 10 15"><path d="M8.500 1L2 7.500 8.500 14" fill="none" stroke="#a4a9b0" stroke-width="1.700"/></svg>
  <span class="t" style="left:36px;top:16px;font-size:14px;color:#828a94;letter-spacing:.1px">Назад</span>
  <span class="t" style="left:229px;top:10px;font-size:13px;font-weight:bold;color:#222;letter-spacing:-.35px">Сергей Песков</span>
  <span class="t" style="left:214px;top:28px;font-size:12.500px;color:#939699;letter-spacing:-.15px">был в сети час назад</span>
  <svg class="abs" style="left:425px;top:16px" width="18" height="18" viewBox="0 0 18 18"><circle cx="8" cy="8" r="6" fill="none" stroke="#a3a9b1" stroke-width="1.700"/><path d="M12.400 12.400L16.500 16.500" stroke="#a3a9b1" stroke-width="1.800" stroke-linecap="round"/></svg>
  <svg class="abs" style="left:463px;top:22px" width="18" height="4" viewBox="0 0 18 4"><circle cx="2" cy="2" r="1.700" fill="#a3a9b1"/><circle cx="9" cy="2" r="1.700" fill="#a3a9b1"/><circle cx="16" cy="2" r="1.700" fill="#a3a9b1"/></svg>
  <svg class="abs" style="left:505px;top:9px" width="30" height="30"><use href="#avS"/></svg>

  <!-- input area -->
  <div class="abs" style="left:0;top:492px;width:550px;height:62px;background:#fafbfc;border-top:1px solid #e7e8ec"></div>
  <svg class="abs" style="left:18px;top:512px" width="24" height="26" viewBox="0 0 24 26"><path d="M20.500 11.500l-8.800 8.800a4.600 4.600 0 0 1-6.500-6.500l9.300-9.300a3.100 3.100 0 0 1 4.400 4.400l-9 9a1.550 1.550 0 0 1-2.200-2.200l7.600-7.600" fill="none" stroke="#9aa0a8" stroke-width="1.800" stroke-linecap="round"/></svg>
  <div class="abs" style="left:56px;top:505px;width:438px;height:38px;background:#fff;border:1px solid #d3d9de;border-radius:6px"></div>
  <span class="t" style="left:69px;top:517px;font-size:13px;color:#828282;letter-spacing:.05px">Напишите сообщение...</span>
  <svg class="abs" style="left:423px;top:514px" width="22" height="20" viewBox="0 0 22 20"><path d="M7.600 2.500L6.300 4.500H3.500A2 2 0 0 0 1.500 6.500v8.800a2 2 0 0 0 2 2h15a2 2 0 0 0 2-2V6.500a2 2 0 0 0-2-2h-2.800L14.400 2.500z" fill="none" stroke="#9ea4ab" stroke-width="1.600" stroke-linejoin="round"/><circle cx="11" cy="10.700" r="3.600" fill="none" stroke="#9ea4ab" stroke-width="1.600"/></svg>
  <svg class="abs" style="left:456px;top:513px" width="22" height="22" viewBox="0 0 22 22"><circle cx="11" cy="11" r="9.200" fill="none" stroke="#9ea4ab" stroke-width="1.600"/><circle cx="7.800" cy="8.700" r="1.300" fill="#9ea4ab"/><circle cx="14.200" cy="8.700" r="1.300" fill="#9ea4ab"/><path d="M6.600 13.200a5 5 0 0 0 8.800 0" fill="none" stroke="#9ea4ab" stroke-width="1.600" stroke-linecap="round"/></svg>
  <svg class="abs" style="left:512px;top:512px" width="20" height="25" viewBox="0 0 20 25"><rect x="6" y="1.500" width="8" height="14" rx="4" fill="none" stroke="#9ea4ab" stroke-width="1.700"/><path d="M2 11.500a8 8 0 0 0 16 0M10 19.500v4" fill="none" stroke="#9ea4ab" stroke-width="1.700" stroke-linecap="round"/></svg>
</div>
<div class="panel" id="rmenu" style="left:925px;top:170px;width:230px;height:153px;overflow:hidden">
  <span class="t rm" style="left:19px;top:14px">Все сообщения</span>
  <span class="t rm" style="left:19px;top:47px;letter-spacing:.2px">Непрочитанные</span>
  <span class="t rm" style="left:19px;top:79px;letter-spacing:.25px">Важные</span>
  <div class="abs" style="left:15px;top:107px;width:200px;height:1px;background:#e7e8ec"></div>
  <div class="abs" style="left:0;top:115px;width:230px;height:32px;background:#f0f2f5;border-left:2px solid #5181b8"></div>
  <span class="t" style="left:19px;top:124px;font-size:13px;font-weight:bold;color:#222;letter-spacing:-.35px">Сергей Песков</span>
</div>

<!-- friends online widget -->
<div class="abs" style="left:1289px;top:703px;width:51px;height:37px;background:#dae2ea;border-radius:3px 3px 0 0"></div>
<span class="t" style="left:1301px;top:715px;font-size:12px;font-weight:bold;color:#93a3ba;letter-spacing:-.6px">20</span>
<svg class="abs" style="left:1317px;top:716px" width="11" height="11" viewBox="0 0 11 11"><circle cx="5.500" cy="3" r="2.600" fill="#8c9db4"/><path d="M.5 10.500c0-2.800 2.200-4 5-4s5 1.200 5 4z" fill="#8c9db4"/></svg>

<!-- page scrollbar -->
<div id="sb">
  <div class="sbtn" style="top:0"><svg width="16" height="16" viewBox="0 0 16 16"><path d="M4 10l3.500-4 3.500 4z" fill="#000"/></svg></div>
  <div class="abs" style="left:0;top:519px;width:16px;height:92px;background:#d4d0c8;box-shadow:inset 1px 1px 0 #fff,inset -1px -1px 0 #404040,inset -2px -2px 0 #808080"></div>
  <div class="sbtn" style="top:611px"><svg width="16" height="16" viewBox="0 0 16 16"><path d="M4 6l3.500 4 3.500-4z" fill="#000"/></svg></div>
</div>

<!-- ================= TASKBAR ================= -->
<div id="taskbar">
  <div class="abs btn3d" style="left:2px;top:4px;width:52px;height:22px"></div>
  <svg class="abs" style="left:5px;top:6px" width="17" height="17" viewBox="0 0 17 17"><path d="M1.500 3.500c2-1.200 4-1.200 6 0l-1.300 4.800c-2-1.200-4-1.200-6 0z" fill="#e8612c"/><path d="M8.500 3.900c2 1.100 4 1.100 6-.1l-1.300 4.800c-2 1.200-4 1.200-6 .1z" fill="#7fba42"/><path d="M0 9.300c2-1.200 4-1.200 6 0l-1.300 4.700c-2-1.200-4-1.200-6 0z" fill="#3d8fdb"/><path d="M7 9.700c2 1.100 4 1.100 6-.1l-1.300 4.700c-2 1.200-4 1.200-6 .1z" fill="#f6b419"/></svg>
  <span class="t" style="left:21px;top:9px;font-size:12px;font-weight:bold;letter-spacing:-.5px;color:#000">Пуск</span>
  <!-- quick launch -->
  <svg class="abs" style="left:70px;top:7px" width="16" height="16" viewBox="0 0 16 16"><path d="M1 3h5l1.500 1.500H15V14H1z" fill="#f0dc8c"/><path d="M2 8h12v6H2z" fill="#5aa6d8"/><path d="M4 14v-3a4 3 0 0 1 8 0v3" fill="none" stroke="#d9ecf6" stroke-width="1.500"/></svg>
  <svg class="abs" style="left:103px;top:7px" width="16" height="16" viewBox="0 0 16 16"><rect x=".5" y=".5" width="15" height="15" fill="#dbe7f5" stroke="#4a90d4"/><circle cx="8" cy="8" r="6" fill="#f08a1c"/><path d="M6 4.500l5.500 3.500L6 11.500z" fill="#fff"/></svg>
  <svg class="abs" style="left:137px;top:7px" width="16" height="16" viewBox="0 0 16 16"><circle cx="8" cy="8" r="7.200" fill="#e6f4f6" stroke="#1d9aa8" stroke-width="1.600"/><path d="M4.800 8.400h6.600a3.300 3.300 0 1 0-1 2.600" fill="none" stroke="#1d9aa8" stroke-width="1.700"/></svg>
  <!-- task button -->
  <div class="abs" style="left:164px;top:4px;width:160px;height:22px;background:#fff;box-shadow:inset 1px 1px 0 #404040,inset -1px -1px 0 #fff,inset 2px 2px 0 #808080;background-image:repeating-conic-gradient(#fff 0 25%,#ece9e4 0 50%);background-size:2px 2px"></div>
  <svg class="abs" style="left:168px;top:7px" width="16" height="16" viewBox="0 0 16 16"><circle cx="8" cy="8" r="7.500" fill="#e6532b"/><circle cx="8.300" cy="8.600" r="5.600" fill="#f9a72a"/><circle cx="8.800" cy="8" r="3.400" fill="#6b3fb3"/><path d="M1.500 5c1.500-3 4-4.300 6.500-4.300-1.500 1-2 2-1.700 3.200C4.500 4 3 5.500 3.200 8z" fill="#f36c21"/></svg>
  <span class="t" style="left:188px;top:8px;font-size:12px;font-weight:bold;letter-spacing:-.15px;color:#000">Диалоги - Mozilla Fire...</span>
  <!-- tray -->
  <span class="t" style="left:1154px;top:8px;font-size:12px;color:#000;letter-spacing:-.3px">RU</span>
  <div class="abs" style="left:1174px;top:4px;width:2px;height:22px;box-shadow:inset 1px 0 0 #808080,inset -1px 0 0 #fff"></div>
  <div class="abs" style="left:1178px;top:3px;width:187px;height:23px;box-shadow:inset 1px 1px 0 #808080,inset -1px -1px 0 #fff"></div>
  <svg class="abs" style="left:1185px;top:6px" width="16" height="16" viewBox="0 0 16 16"><circle cx="8" cy="8" r="7.300" fill="#e8f6f8" stroke="#12a0b4" stroke-width="1.500"/><path d="M4.700 8.500h6.400a3.200 3.200 0 1 0-1 2.500" fill="none" stroke="#12a0b4" stroke-width="1.800"/><rect x="10.500" y="10.500" width="5" height="5" fill="#12a0b4"/></svg>
  <svg class="abs" style="left:1209px;top:6px" width="17" height="16" viewBox="0 0 17 16"><path d="M2 1v14.500" stroke="#6a6a6a" stroke-width="1.600"/><path d="M3.500 2h7l-1 1.800 6-.3-2.500 3.500H8.500L9 8.500H3.500z" fill="#fafafa" stroke="#7a7a7a" stroke-width=".9"/></svg>
  <svg class="abs" style="left:1233px;top:6px" width="16" height="16" viewBox="0 0 16 16"><path d="M1.500 5.500h3L8.500 1.500v13L4.500 10.500h-3z" fill="#f4f4f4" stroke="#7a7a7a" stroke-width=".9"/><path d="M11 3.500a6 6 0 0 1 0 9" fill="none" stroke="#9a9a9a" stroke-width="1.200"/></svg>
  <svg class="abs" style="left:1257px;top:6px" width="16" height="16" viewBox="0 0 16 16"><g fill="#fdfdfd" stroke="#6f6f6f" stroke-width=".9"><rect x=".5" y="11.500" width="2.500" height="3"/><rect x="4.300" y="9" width="2.500" height="5.500"/><rect x="8.100" y="5.500" width="2.500" height="9"/><rect x="11.900" y="1.500" width="2.500" height="13"/></g></svg>
  <svg class="abs" style="left:1281px;top:5px" width="16" height="18" viewBox="0 0 16 18"><rect x="1" y="3" width="8" height="14" rx="1" fill="#b8b8b8" stroke="#555" stroke-width=".8"/><rect x="3" y="1.500" width="4" height="2" fill="#777"/><rect x="2" y="9" width="6" height="7" fill="#e01818"/><path d="M8 4v3M12 4v3M6.500 7h7v3.500a3.500 3.500 0 0 1-2.500 3.300V17h-2v-3.200A3.500 3.500 0 0 1 6.500 10.500z" fill="#fff" stroke="#333" stroke-width=".9"/></svg>
  <span class="t" style="left:1312px;top:9px;font-size:11.500px;color:#000;letter-spacing:-.35px">19:53</span>
  <svg class="abs" style="left:1347px;top:10px" width="14" height="12" viewBox="0 0 14 12"><rect x=".5" y=".5" width="13" height="10" fill="#2f6fc4" stroke="#2a559c"/><path d="M1 10L13 5v5z" fill="#4d8fe0"/><rect x="4" y="10.500" width="6" height="1.200" fill="#6a7fa4"/></svg>
</div>

</body>
</html>
